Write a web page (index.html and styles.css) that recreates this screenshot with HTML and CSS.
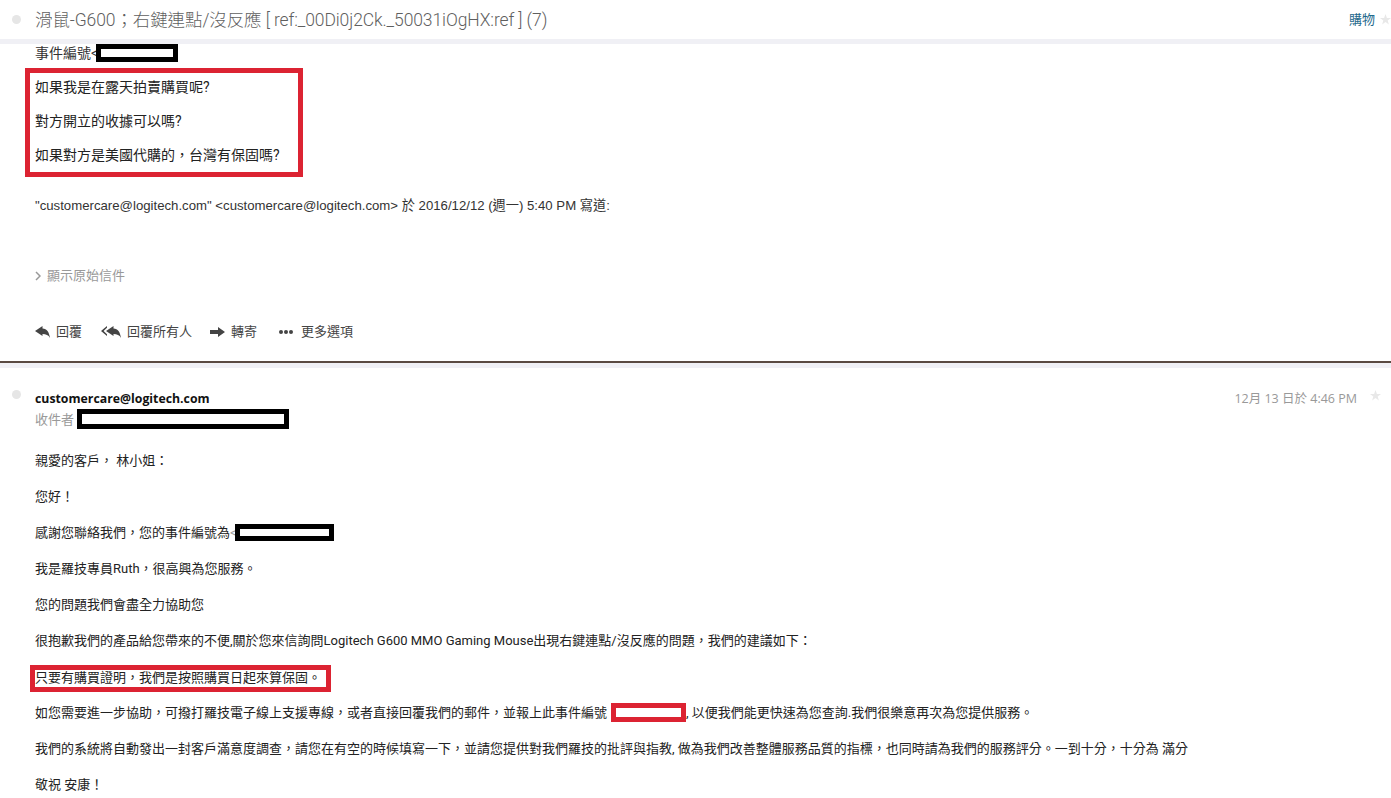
FILE: index.html
```html
<!DOCTYPE html>
<html lang="zh-Hant">
<head>
    <meta charset="UTF-8">
    <title>滑鼠-G600；右鍵連點/沒反應</title>
    <link rel="stylesheet" href="styles.css">
</head>
<body>
    <header class="subject-bar">
        <span class="dot"></span>
        <h1 class="subject">滑鼠-G600；右鍵連點/沒反應 [ ref:_00Di0j2Ck._50031iOgHX:ref ] (7)</h1>
        <a class="folder">購物</a>
        <svg class="star" viewBox="0 0 14 14"><polygon points="7,0 8.8,5 14,5 9.8,8.2 11.3,13.500 7,10.300 2.700,13.500 4.200,8.200 0,5 5.200,5"/></svg>
    </header>
    <div class="strip"></div>

    <section class="message-top">
        <div class="case-line">事件編號&lt;<span class="redact redact-case"></span></div>
        <div class="red-box questions">
            <p>如果我是在露天拍賣購買呢?</p>
            <p>對方開立的收據可以嗎?</p>
            <p>如果對方是美國代購的，台灣有保固嗎?</p>
        </div>
        <div class="quote-line">"customercare@logitech.com" &lt;customercare@logitech.com&gt; 於 2016/12/12 (週一) 5:40 PM 寫道:</div>
        <div class="show-original">
            <svg class="chevron" viewBox="0 0 6 10"><path d="M1 1l4 4-4 4" fill="none" stroke="#999" stroke-width="1.500"/></svg>
            顯示原始信件
        </div>
        <div class="actions">
            <span class="action">
                <svg class="icon" viewBox="0 0 15 12"><path d="M0 5l7.500-5v2.500c4.500 0 6.500 3.500 7.500 9.500-1.500-3-4-4-7.500-4V10z"/></svg>回覆
            </span>
            <span class="action action-all">
                <svg class="icon icon-wide" viewBox="0 0 20 12"><path d="M5 5l7.500-5v2.500c4.500 0 6.500 3.500 7.500 9.500-1.500-3-4-4-7.500-4V10z"/><path d="M0 5l6-5v1.800L2.600 5 6 8.200V10z"/></svg>回覆所有人
            </span>
            <span class="action action-fwd">
                <svg class="icon" viewBox="0 0 15 12"><path d="M0 4h8V1l7 5-7 5V8H0z"/></svg>轉寄
            </span>
            <span class="action action-more">
                <svg class="icon icon-dots" viewBox="0 0 14 4"><circle cx="2" cy="2" r="2"/><circle cx="7" cy="2" r="2"/><circle cx="12" cy="2" r="2"/></svg>更多選項
            </span>
        </div>
    </section>

    <div class="divider"></div>
    <div class="strip"></div>

    <section class="message">
        <div class="message-head">
            <span class="dot dot-msg"></span>
            <div class="sender">customercare@logitech.com</div>
            <div class="date">12月 13 日於 4:46 PM</div>
            <svg class="star star-msg" viewBox="0 0 14 14"><polygon points="7,0 8.8,5 14,5 9.8,8.2 11.3,13.500 7,10.300 2.700,13.500 4.200,8.200 0,5 5.200,5"/></svg>
        </div>
        <div class="recipient"><span class="recipient-label">收件者</span><span class="redact redact-to"></span></div>
        <div class="body-text">
            <p>親愛的客戶， 林小姐：</p>
            <p>您好！</p>
            <p>感謝您聯絡我們，您的事件編號為<span class="faint">&lt;</span><span class="redact redact-ref"></span></p>
            <p>我是羅技專員Ruth，很高興為您服務。</p>
            <p>您的問題我們會盡全力協助您</p>
            <p>很抱歉我們的產品給您帶來的不便,關於您來信詢問Logitech G600 MMO Gaming Mouse出現右鍵連點/沒反應的問題，我們的建議如下：</p>
            <p class="highlight-row"><span class="red-box highlight">只要有購買證明，我們是按照購買日起來算保固。</span></p>
            <p>如您需要進一步協助，可撥打羅技電子線上支援專線，或者直接回覆我們的郵件，並報上此事件編號<span class="redact redact-red"></span>, 以便我們能更快速為您查詢.我們很樂意再次為您提供服務。</p>
            <p>我們的系統將自動發出一封客戶滿意度調查，請您在有空的時候填寫一下，並請您提供對我們羅技的批評與指教, 做為我們改善整體服務品質的指標，也同時請為我們的服務評分。一到十分，十分為 滿分</p>
            <p>敬祝 安康！</p>
        </div>
    </section>
</body>
</html>
```

FILE: styles.css
```css
html, body {
    height: 798px;
    overflow: hidden;
}
body {
    margin: 0;
    background-color: #fff;
    color: #222;
    font-family: Roboto, "Noto Sans CJK TC", sans-serif;
    font-size: 13px;
    line-height: 18px;
}
p {
    margin: 0 0 18px;
}
.subject-bar {
    display: flex;
    align-items: center;
    height: 39px;
    padding-left: 12px;
}
.dot {
    flex: none;
    width: 9px;
    height: 9px;
    margin-right: 14px;
    border-radius: 50%;
    background-color: #e6e6e6;
}
.subject {
    flex: 1;
    margin: 0;
    color: #5f5f5f;
    font-size: 17.5px;
    font-weight: 300;
    letter-spacing: -0.1px;
    line-height: 24px;
}
.folder {
    color: #1f6a8c;
}
.star {
    flex: none;
    width: 11px;
    height: 11px;
    margin-left: 5px;
    fill: #e8e8e8;
}
.strip {
    height: 5px;
    background-color: #f0f0f5;
}
.message-top {
    padding-left: 35px;
}
.case-line {
    display: flex;
    height: 18px;
    color: #333;
    font-size: 14px;
}
.redact {
    display: inline-block;
    box-sizing: border-box;
    border: 5px solid #000;
    background-color: #fff;
}
.redact-case {
    width: 82px;
    height: 18px;
    margin-left: -2px;
}
.red-box {
    box-sizing: border-box;
    border: 5px solid #dc2332;
}
.questions {
    width: 278px;
    height: 109px;
    margin: 6px 0 20px -10px;
    padding: 5px 0 0 5px;
    font-size: 14px;
}
.questions p {
    margin-bottom: 16px;
}
.quote-line {
    color: #333;
    font-family: "Liberation Sans", "Noto Sans CJK TC", sans-serif;
    font-size: 13.2px;
}
.show-original {
    display: flex;
    align-items: center;
    gap: 6px;
    margin-top: 52px;
    color: #999;
}
.chevron {
    width: 6px;
    height: 10px;
}
.actions {
    display: flex;
    align-items: center;
    height: 18px;
    margin-top: 38px;
    color: #444;
}
.action {
    display: flex;
    align-items: center;
    gap: 6px;
}
.action-all {
    margin-left: 19px;
}
.action-fwd {
    margin-left: 18px;
}
.action-more {
    margin-left: 22px;
    gap: 8px;
}
.icon {
    width: 15px;
    height: 12px;
    fill: #444;
}
.icon-wide {
    width: 20px;
}
.icon-dots {
    width: 14px;
    height: 4px;
}
.divider {
    height: 2px;
    margin-top: 20px;
    background-color: #5a4a42;
}
.message {
    padding: 22px 0 0 35px;
}
.message-head {
    position: relative;
    display: flex;
    height: 18px;
}
.dot-msg {
    position: absolute;
    left: -23px;
    top: 0;
}
.sender {
    flex: 1;
    color: #111;
    font-family: "Open Sans", sans-serif;
    font-weight: 700;
    font-size: 12.3px;
}
.date {
    margin-right: 34px;
    color: #999;
    font-family: "Open Sans", "Noto Sans CJK TC", sans-serif;
    font-size: 12.5px;
}
.star-msg {
    position: absolute;
    right: 10px;
    top: 0;
}
.recipient {
    display: flex;
    height: 20px;
    margin-top: 1px;
    color: #999;
}
.recipient-label {
    padding-top: 2px;
}
.redact-to {
    width: 212px;
    height: 20px;
    margin-left: 3px;
}
.body-text {
    margin-top: 23px;
    white-space: nowrap;
}
.faint {
    color: #999;
}
.redact-ref {
    width: 99px;
    height: 17px;
    margin-left: -2px;
    vertical-align: -4px;
}
.redact-red {
    width: 75px;
    height: 19px;
    margin-left: 4px;
    border-color: #dc2332;
    vertical-align: -5px;
}
.highlight-row {
    height: 18px;
    margin-bottom: 20px;
}
.highlight {
    display: block;
    width: 301px;
    height: 27px;
    margin: -3px 0 0 -5px;
    line-height: 16px;
}
```
